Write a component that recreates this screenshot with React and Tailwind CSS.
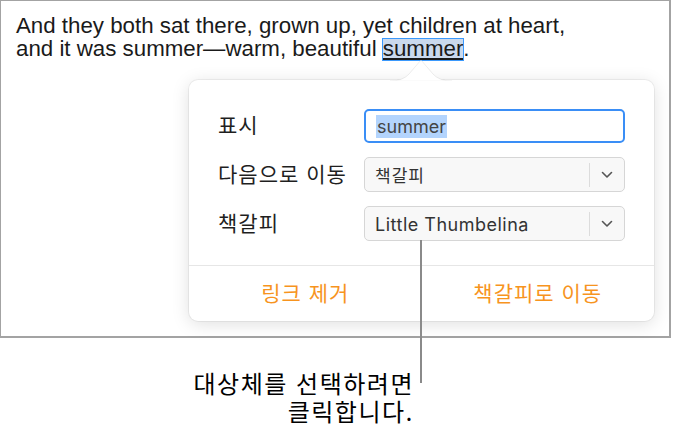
import React from 'react';

const Chevron = () => (
  <svg width="12" height="8" viewBox="0 0 12 8" fill="none">
    <polyline points="1.5,1.5 6,6 10.5,1.5" stroke="#555" strokeWidth="1.6" strokeLinecap="round" strokeLinejoin="round" />
  </svg>
);

const SelectBox = ({ children }) => (
  <div className="flex items-center h-[35px] rounded-[5px] border border-[#d6d6d6] bg-[#f8f8f8]">
    <span className="flex-1 pl-[10px] text-[#333]">{children}</span>
    <div className="w-px h-[24px] bg-[#dcdcdc]" />
    <div className="w-[34px] flex justify-center">
      <Chevron />
    </div>
  </div>
);

const App = () => {
  return (
    <div className="relative w-[673px] h-[438px] bg-white font-['Inter','Noto_Sans_CJK_KR',sans-serif]">
      <div className="w-[671px] h-[338px] border-t border-l border-r-2 border-b-2 border-[#a3a3a3] pt-[13px] pl-[15px]">
        <p className="font-['Liberation_Sans','Noto_Sans_CJK_KR',sans-serif] text-[22.3px] leading-[23px] text-[#1a1a1a]">
          And they both sat there, grown up, yet children at heart,
          <br />
          and it was summer—warm, beautiful{' '}
          <span className="inline-block leading-[19px] pb-[2px] bg-[#cad9ed] outline-[1.5px] outline-solid outline-[#3b99fc] underline underline-offset-[2px]">summer</span>.
        </p>

        <div className="relative ml-[173px] mt-[20px] w-[465px] h-[241px] rounded-[9px] bg-white shadow-[0_0_0_1px_rgba(0,0,0,0.05),0_3px_18px_rgba(0,0,0,0.13)]">
          <svg className="absolute left-[201px] top-[-21px]" width="62" height="23" viewBox="0 0 62 23">
            <path d="M0 22 Q 13 22 19 15 L 31 1 L 43 15 Q 49 22 62 22 Z" fill="#fff" stroke="rgba(0,0,0,0.07)" strokeWidth="1" />
            <rect x="0" y="21.5" width="62" height="2" fill="#fff" />
          </svg>

          <div className="grid grid-cols-[146px_261px] gap-y-[14px] content-start items-center pt-[29px] pl-[29px] h-[185px] text-[21px] tracking-[1px] text-[#1f1f1f]">
            <span>표시</span>
            <div className="flex items-center h-[34px] rounded-[5px] border-2 border-[#3a8ef6] bg-white pl-[10px] tracking-normal">
              <span className="bg-[#b3d4fd] text-[18px] leading-[23px] text-[#444] px-[1px]">summer</span>
            </div>

            <span>다음으로 이동</span>
            <SelectBox>
              <span className="text-[17px]">책갈피</span>
            </SelectBox>

            <span>책갈피</span>
            <SelectBox>
              <span className="text-[18px] tracking-[0.5px]">Little Thumbelina</span>
            </SelectBox>
          </div>

          <div className="flex h-[56px] border-t border-[#e6e6e6] text-[21px] tracking-[1px] text-[#f7941e]">
            <div className="flex-1 flex items-center justify-center">링크 제거</div>
            <div className="flex-1 flex items-center justify-center">책갈피로 이동</div>
          </div>
        </div>
      </div>

      <div className="mt-[33px] w-[414px] text-right text-[24px] tracking-[1.5px] leading-[28px] text-black">
        대상체를 선택하려면
        <br />
        클릭합니다.
      </div>

      <div className="absolute left-[420px] top-[240px] w-[2px] h-[143px] bg-[#8a8a8a]" />
    </div>
  );
};

export default App;
